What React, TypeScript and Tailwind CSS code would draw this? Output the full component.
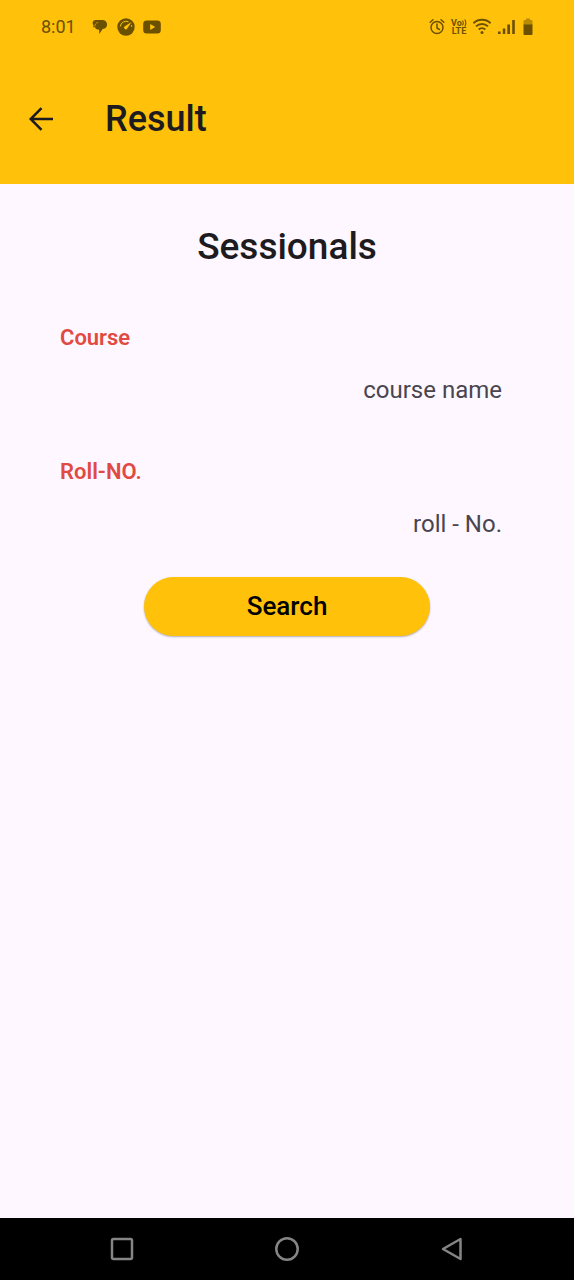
import type { ReactNode } from "react";

function StatusBar() {
  return (
    <div className="flex h-[53px] items-center justify-between px-[41px] text-[#6b5000]">
      <div className="flex items-center gap-[15px]">
        <span className="text-lg leading-6">8:01</span>
        <div className="flex items-center gap-2">
          <svg width="18" height="18" viewBox="0 0 18 18" fill="currentColor" aria-hidden="true">
            <path d="M5 2h6.500a4.600 4.600 0 0 1 4.600 4.600A4.600 4.600 0 0 1 11.700 11L8.200 16v-4.300C5.800 11.700 4.200 10.600 3.700 9L2 9.600l.6-2.300A3 3 0 0 1 1.600 5 3.200 3.200 0 0 1 5 2z" />
            <path d="M7 4.400C5 4.800 3.700 6.500 3.900 8.600" fill="none" stroke="#ffc10a" strokeWidth="0.600" />
          </svg>
          <svg width="18" height="18" viewBox="0 0 18 18" aria-hidden="true">
            <circle cx="9" cy="9" r="8.700" fill="currentColor" />
            <path d="M3.300 8.500A5.800 5.800 0 0 1 11.500 3.800M14.500 7a5.800 5.800 0 0 1 .2 1.800" fill="none" stroke="#ffc10a" strokeWidth="1" />
            <path d="M14.600 4 10.200 10.500a1.700 1.700 0 1 1-2.400-2.300z" fill="#ffc10a" />
          </svg>
          <svg width="18" height="18" viewBox="0 0 18 18" aria-hidden="true">
            <rect x="0.200" y="2.500" width="17.600" height="13" rx="3.500" fill="currentColor" />
            <path d="M7.200 6v6l5-3z" fill="#ffc10a" />
          </svg>
        </div>
      </div>
      <div className="flex items-center gap-[6px]">
        <svg width="16" height="18" viewBox="0 0 16 18" fill="none" stroke="currentColor" strokeWidth="1.500" strokeLinecap="round" aria-hidden="true">
          <circle cx="8" cy="9.500" r="6" />
          <path d="M8 6v4l2.400 1.500M1.200 4.200l2.800-2.400M14.800 4.200l-2.800-2.400" />
        </svg>
        <div className="flex w-4 flex-col items-center text-[9px] font-bold leading-[8px]">
          <span className="flex items-center">
            Vo
            <svg width="5" height="8" viewBox="0 0 5 8" fill="none" stroke="currentColor" strokeWidth="1.100" aria-hidden="true">
              <path d="M.5 1.500q1.500 2.500 0 5M2.800.5q2 3.500 0 7" />
            </svg>
          </span>
          <span>LTE</span>
        </div>
        <svg width="18" height="18" viewBox="0 0 18 18" fill="none" stroke="currentColor" strokeWidth="1.900" aria-hidden="true">
          <path d="M.4 5.200a12.400 12.400 0 0 1 17.200 0M3 8.400a8.600 8.600 0 0 1 12 0M5.700 11.500a4.800 4.800 0 0 1 6.600 0" />
          <circle cx="9" cy="14.400" r="1.500" fill="currentColor" stroke="none" />
        </svg>
        <svg width="18" height="18" viewBox="0 0 18 18" fill="currentColor" aria-hidden="true">
          <path d="M1 13.500h2.600V16H1zM5.800 10.500h2.500V16H5.800zM10.300 6.500h2.700V16h-2.700zM15.200 2h2.600v14h-2.600z" />
        </svg>
        <svg width="10" height="18" viewBox="0 0 10 18" className="ml-[2px]" aria-hidden="true">
          <path d="M3 .5h4V2h1.500a1 1 0 0 1 1 1v4h-9V3a1 1 0 0 1 1-1H3z" fill="#b98b00" />
          <path d="M.5 6.500h9V16a1 1 0 0 1-1 1h-7a1 1 0 0 1-1-1z" fill="currentColor" />
        </svg>
      </div>
    </div>
  );
}

function Field({ id, label, placeholder }: { id: string; label: string; placeholder: string }) {
  return (
    <div className="flex flex-col">
      <label htmlFor={id} className="text-[22px] font-semibold leading-8 text-[#e04a42]">
        {label}
      </label>
      <input
        id={id}
        type="text"
        placeholder={placeholder}
        className="mt-1 h-16 w-full bg-transparent pr-3 text-right text-2xl text-[#49454f] outline-none placeholder:text-[#49454f]"
      />
    </div>
  );
}

function NavButton({ label, children }: { label: string; children: ReactNode }) {
  return (
    <button type="button" aria-label={label} className="flex h-12 w-12 items-center justify-center">
      <svg width="26" height="26" viewBox="0 0 26 26" fill="none" stroke="#858585" strokeWidth="2.500" strokeLinejoin="round" aria-hidden="true">
        {children}
      </svg>
    </button>
  );
}

export default function App() {
  return (
    <div className="flex min-h-screen flex-col bg-[#fef7ff] font-['Roboto',sans-serif] text-[#1d1b20]">
      <header className="bg-[#ffc10a]">
        <StatusBar />
        <div className="flex h-[131px] items-center gap-10 px-[17px]">
          <button type="button" aria-label="Back" className="flex h-12 w-12 items-center justify-center">
            <svg width="26" height="26" viewBox="0 0 26 26" fill="none" stroke="currentColor" strokeWidth="2.500" aria-hidden="true">
              <path d="M25 13H3M13.500 2.200 2.700 13l10.800 10.800" />
            </svg>
          </button>
          <h1 className="text-4xl font-medium">Result</h1>
        </div>
      </header>

      <main className="flex flex-1 flex-col px-[60px] pt-10">
        <h2 className="text-center text-[37px] font-medium leading-[46px]">Sessionals</h2>
        <form className="mt-[52px] flex flex-col" onSubmit={(e) => e.preventDefault()}>
          <div className="flex flex-col gap-[34px]">
            <Field id="course" label="Course" placeholder="course name" />
            <Field id="roll" label="Roll-NO." placeholder="roll - No." />
          </div>
          <button
            type="submit"
            className="mt-[21px] h-[59px] w-[286px] self-center rounded-full bg-[#ffc10a] text-[26px] font-medium text-black shadow-[0_1px_2px_rgba(0,0,0,0.3)]"
          >
            Search
          </button>
        </form>
      </main>

      <nav className="flex h-[62px] items-center justify-center gap-[117px] bg-black">
        <NavButton label="Recent apps">
          <rect x="3" y="3" width="20" height="20" rx="1.500" />
        </NavButton>
        <NavButton label="Home">
          <circle cx="13" cy="13" r="10.700" />
        </NavButton>
        <NavButton label="Back">
          <path d="M4 13 21.500 3v20z" />
        </NavButton>
      </nav>
    </div>
  );
}
